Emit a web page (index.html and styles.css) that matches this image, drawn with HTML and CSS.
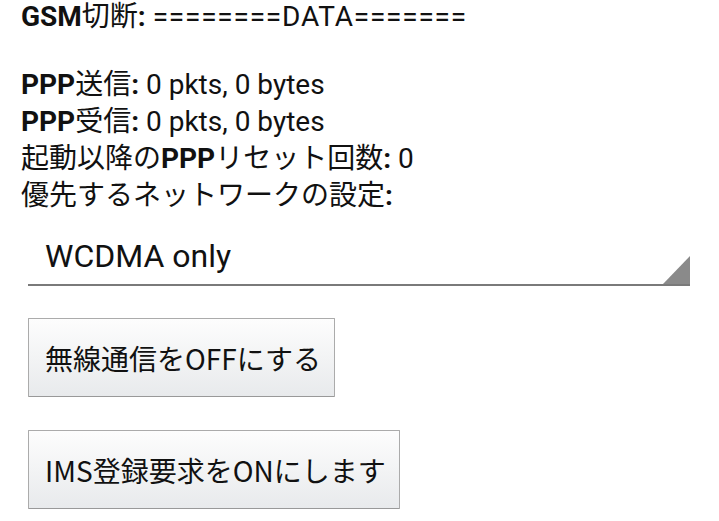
FILE: index.html
```html
<!DOCTYPE html>
<html lang="ja">
<head>
    <meta charset="UTF-8">
    <meta name="viewport" content="width=device-width, initial-scale=1.0">
    <title>Phone info</title>
    <link rel="stylesheet" href="styles.css">
</head>
<body>

    <div class="info">
        <p class="gsm"><b>GSM</b>切断<b>:</b> <span class="gsm-state">========DATA=======</span></p>

        <div class="stats">
            <p><b>PPP</b>送信<b>:</b> 0 pkts, 0 bytes</p>
            <p><b>PPP</b>受信<b>:</b> 0 pkts, 0 bytes</p>
            <p>起動以降の<b>PPP</b>リセット回数<b>:</b> 0</p>
            <p>優先するネットワークの設定<b>:</b></p>
        </div>
    </div>

    <!-- network type spinner -->
    <div class="spinner">
        <span class="spinner-text">WCDMA only</span>
        <span class="spinner-arrow"></span>
    </div>

    <div class="actions">
        <button class="btn">無線通信をOFFにする</button>
        <button class="btn">IMS登録要求をONにします</button>
    </div>

</body>
</html>
```

FILE: styles.css
```css
body {
    margin: 0;
    background-color: #ffffff;
    color: #111111;
    font-family: Roboto, "Noto Sans CJK JP", sans-serif;
}
p { margin: 0; }
b { font-weight: bold; }

.info {
    padding-left: 21px;
    font-size: 28px;
}
.gsm {
    line-height: 33px;
}
.gsm-state {
    letter-spacing: 0.8px;
}
.stats {
    margin-top: 33px;
    line-height: 37px;
}

.spinner {
    display: flex;
    justify-content: space-between;
    align-items: flex-end;
    margin: 14px 0 0 28px;
    width: 662px;
    height: 56px;
    border-bottom: 2px solid #7a7a7a;
}
.spinner-text {
    padding-left: 17px;
    font-size: 32px;
    line-height: 56px;
    color: #111111;
    align-self: flex-start;
}
.spinner-arrow {
    width: 0;
    height: 0;
    border-left: 27px solid transparent;
    border-bottom: 28px solid #8a8a8a;
}

.actions {
    display: flex;
    flex-direction: column;
    align-items: flex-start;
    gap: 33px;
    margin: 32px 0 0 28px;
}
.btn {
    height: 79px;
    padding: 0 13px 0 16px;
    font-family: "Noto Sans CJK JP", sans-serif;
    font-size: 28px;
    color: #111111;
    background: linear-gradient(#fdfdfd, #e8eaec);
    border: 1px solid #ababab;
    border-bottom-color: #999999;
    border-radius: 1px;
}
```
